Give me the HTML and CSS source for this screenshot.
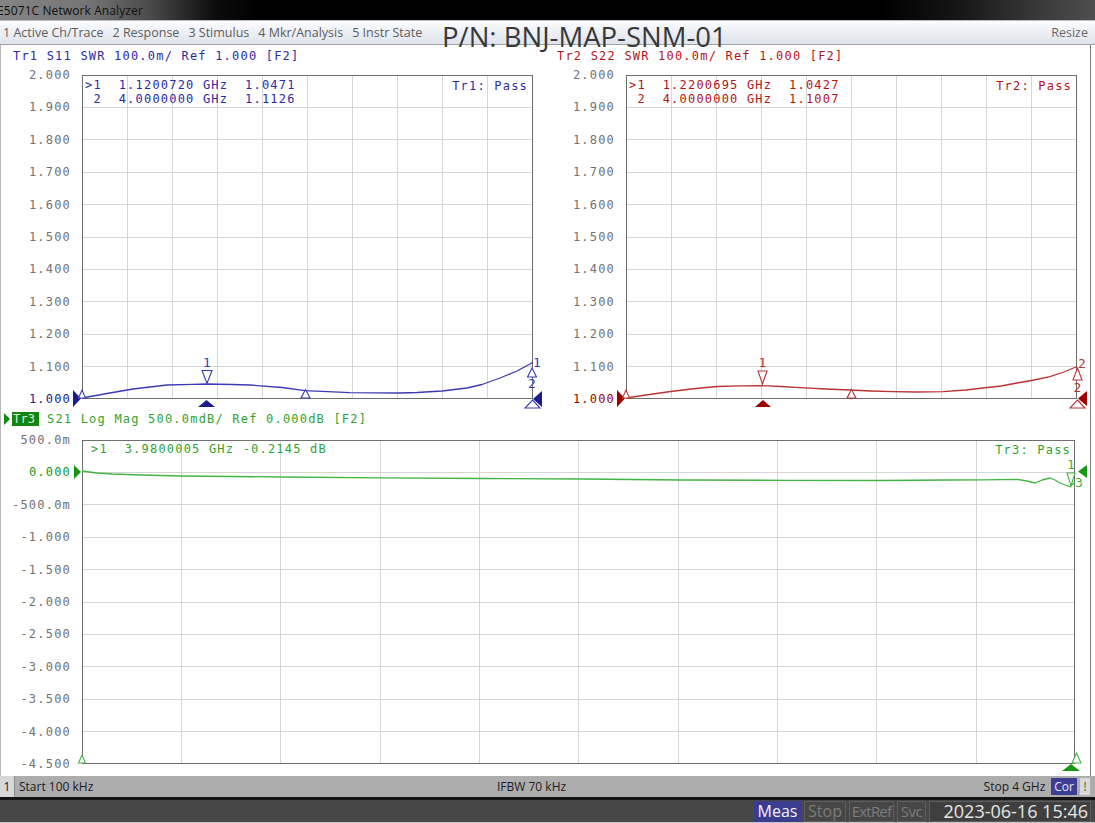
FILE: index.html
```html
<!DOCTYPE html>
<html>
<head>
<meta charset="utf-8">
<title>E5071C Network Analyzer</title>
<link rel="stylesheet" href="styles.css">
</head>
<body>
<div class="app">
  <div class="titlebar"><span class="title">E5071C Network Analyzer</span></div>
  <div class="menubar">
    <span class="menu-item">1 Active Ch/Trace</span>
    <span class="menu-item">2 Response</span>
    <span class="menu-item">3 Stimulus</span>
    <span class="menu-item">4 Mkr/Analysis</span>
    <span class="menu-item">5 Instr State</span>
    <span class="pn">P/N: BNJ-MAP-SNM-01</span>
    <span class="resize">Resize</span>
  </div>
  <div class="main">
    <div class="top-row">
      <section class="panel panel-a tr1">
        <div class="trace-head">Tr1 S11 SWR 100.0m/ Ref 1.000 [F2]</div>
        <div class="chart">
          <div class="yaxis">
            <span>2.000</span><span>1.900</span><span>1.800</span><span>1.700</span><span>1.600</span><span>1.500</span><span>1.400</span><span>1.300</span><span>1.200</span><span>1.100</span><span class="ref">1.000</span>
          </div>
          <div class="plot">
            <svg class="plot-svg" width="451" height="324" viewBox="0 0 451 324">
              <path class="grid" d="M45.5 0V324M90.5 0V324M135.5 0V324M180.5 0V324M225.5 0V324M270.5 0V324M315.5 0V324M360.5 0V324M405.5 0V324M0 32.5H451M0 64.5H451M0 97.5H451M0 129.5H451M0 162.5H451M0 194.5H451M0 226.5H451M0 259.5H451M0 291.5H451"/>
              <rect class="frame" x="0.5" y="0.5" width="450" height="323"/>
              <polyline class="trace" points="0,323 25,318.5 51,314 85,310 110,309.3 125,309 150,309.5 168,310 200,312.5 223,315.7 268,317.7 318,318 335,317.5 360,316 385,313 400,309.5 418,303 435,296 448,289 451,287"/>
              <polygon class="fill" points="-9,315 -1,323.5 -9,332"/>
              <polygon class="open" points="0,315 3.5,323 -3.5,323"/>
              <text class="mk" x="125" y="292">1</text>
              <polygon class="open" points="120,295.5 130,295.5 125,308.5"/>
              <polygon class="fill" points="124.5,325 133,332 116,332"/>
              <polygon class="open" points="223.5,314.5 228,323 219,323"/>
              <text class="mk" x="455" y="292">1</text>
              <polygon class="open" points="450,293 454.5,302 445.5,302"/>
              <text class="mk" x="450" y="313">2</text>
              <polygon class="fill" points="460,316 451,324 460,332"/>
              <polygon class="open" points="450.5,325 458,333 443,333"/>
            </svg>
            <pre class="readout">&gt;1  1.1200720 GHz  1.0471
 2  4.0000000 GHz  1.1126</pre>
            <div class="pass">Tr1: Pass</div>
          </div>
        </div>
      </section>
      <section class="panel panel-b tr2">
        <div class="trace-head">Tr2 S22 SWR 100.0m/ Ref 1.000 [F2]</div>
        <div class="chart">
          <div class="yaxis">
            <span>2.000</span><span>1.900</span><span>1.800</span><span>1.700</span><span>1.600</span><span>1.500</span><span>1.400</span><span>1.300</span><span>1.200</span><span>1.100</span><span class="ref">1.000</span>
          </div>
          <div class="plot">
            <svg class="plot-svg" width="451" height="324" viewBox="0 0 451 324">
              <path class="grid" d="M45.5 0V324M90.5 0V324M135.5 0V324M180.5 0V324M225.5 0V324M270.5 0V324M315.5 0V324M360.5 0V324M405.5 0V324M0 32.5H451M0 64.5H451M0 97.5H451M0 129.5H451M0 162.5H451M0 194.5H451M0 226.5H451M0 259.5H451M0 291.5H451"/>
              <rect class="frame" x="0.5" y="0.5" width="450" height="323"/>
              <polyline class="trace" points="0,323 20,320 41,317 65,314 91,311.5 115,310.8 136,310.7 155,311.5 174,312.7 200,314 224,315 245,316 267,316.7 290,317 317,316.7 340,315 357,313 375,311 391,308 408,305 424,301.7 438,297 451,291.5"/>
              <polygon class="fill" points="-9,315 -1,323.5 -9,332"/>
              <polygon class="open" points="0,315 3.5,323 -3.5,323"/>
              <text class="mk" x="136.5" y="292">1</text>
              <polygon class="open" points="132,296 141,296 136.5,309"/>
              <polygon class="fill" points="137,325 145,332 129,332"/>
              <polygon class="open" points="225.5,314.5 230,323 221,323"/>
              <text class="mk" x="456" y="293">2</text>
              <polygon class="open" points="451.5,293 456,305 447,305"/>
              <text class="mk" x="451.5" y="317">2</text>
              <polygon class="fill" points="461,316 452,323.5 461,331"/>
              <polygon class="open" points="451.5,325 459,333 444,333"/>
            </svg>
            <pre class="readout">&gt;1  1.2200695 GHz  1.0427
 2  4.0000000 GHz  1.1007</pre>
            <div class="pass">Tr2: Pass</div>
          </div>
        </div>
      </section>
    </div>
    <section class="panel panel-c tr3">
      <div class="trace-head"><span class="arrow"></span><span class="tr-badge">Tr3</span>S21 Log Mag 500.0mdB/ Ref 0.000dB [F2]</div>
      <div class="chart chart-wide">
        <div class="yaxis">
          <span>500.0m</span><span class="ref">0.000</span><span>-500.0m</span><span>-1.000</span><span>-1.500</span><span>-2.000</span><span>-2.500</span><span>-3.000</span><span>-3.500</span><span>-4.000</span><span>-4.500</span>
        </div>
        <div class="plot plot-wide">
          <svg class="plot-svg" width="993" height="324" viewBox="0 0 993 324">
            <path class="grid" d="M99.5 0V324M198.5 0V324M298.5 0V324M397.5 0V324M496.5 0V324M596.5 0V324M695.5 0V324M794.5 0V324M894.5 0V324M0 32.5H993M0 64.5H993M0 97.5H993M0 129.5H993M0 162.5H993M0 194.5H993M0 226.5H993M0 259.5H993M0 291.5H993"/>
            <rect class="frame" x="0.5" y="0.5" width="992" height="323"/>
            <polyline class="trace" points="0,31 15,33 30,34 60,35 98,36 150,36.5 200,37 300,37.8 400,38.5 500,39 600,40 700,40.3 800,40.5 868,40 900,39.8 935,39.3 945,41 953,43 960,40 968,38 973,40 978,43 983,45 988,46.7 991,44 993,42"/>
            <polygon class="fill" points="-8,25 -1,32 -8,39"/>
            <polygon class="open" points="0,315 3.5,323 -3.5,323"/>
            <text class="mk" x="989" y="29">1</text>
            <polygon class="open" points="985,33 993,33 989,46"/>
            <text class="mk mk-left" x="993" y="47">3</text>
            <polygon class="fill" points="1005,25 996,31.5 1005,38"/>
            <polygon class="open" points="994.5,313 999,323 990,323"/>
            <polygon class="fill" points="989,324 998,331 980,331"/>
          </svg>
          <pre class="readout">&gt;1  3.9800005 GHz -0.2145 dB</pre>
          <div class="pass">Tr3: Pass</div>
        </div>
      </div>
    </section>
  </div>
  <div class="statusbar">
    <span class="ch-cell">1</span>
    <span class="status-start">Start 100 kHz</span>
    <span class="status-ifbw">IFBW 70 kHz</span>
    <span class="status-stop">Stop 4 GHz</span>
    <span class="cor">Cor</span>
    <span class="bang">!</span>
  </div>
  <div class="taskbar">
    <span class="tb-item tb-meas">Meas</span>
    <span class="tb-item tb-dim tb-stop">Stop</span>
    <span class="tb-item tb-dim tb-ext">ExtRef</span>
    <span class="tb-item tb-dim tb-svc">Svc</span>
    <span class="tb-item tb-clock">2023-06-16 15:46</span>
  </div>
</div>
</body>
</html>
```

FILE: styles.css
```css
* { box-sizing: border-box; }
html, body { margin: 0; padding: 0; }
body {
  width: 1095px;
  height: 823px;
  overflow: hidden;
  background: #ffffff;
  font-family: "Open Sans", "Noto Sans", sans-serif;
}
.app {
  display: flex;
  flex-direction: column;
  width: 1095px;
  height: 823px;
}

/* title bar */
.titlebar {
  height: 20px;
  flex: none;
  display: flex;
  align-items: center;
  background: linear-gradient(90deg, #858585 0px, #747474 90px, #4a4a4a 150px, #0c0c0c 215px, #000 260px, #000 880px, #161616 960px, #3a3a3a 1040px, #4e4e4e 1095px);
}
.title {
  font-size: 12px;
  color: #101010;
  margin-left: -3px;
  letter-spacing: 0.1px;
}

/* menu bar */
.menubar {
  height: 25px;
  flex: none;
  position: relative;
  display: flex;
  align-items: center;
  gap: 9px;
  padding-left: 3px;
  background: linear-gradient(#fbfcfe, #e9edf3 60%, #dfe4eb);
  border-top: 1px solid #b9bec6;
  border-bottom: 1px solid #9ea3aa;
  font-size: 12.5px;
  color: #5c5c5c;
}
.menu-item { white-space: nowrap; }
.pn {
  position: absolute;
  left: 442px;
  top: -1px;
  font-size: 27.5px;
  line-height: 34px;
  color: #383838;
  white-space: nowrap;
}
.resize {
  margin-left: auto;
  margin-right: 7px;
  color: #6a6a6a;
}

/* main area */
.main {
  height: 731px;
  flex: none;
  background: #fff;
  border-left: 1px solid #b8b8b8;
  border-right: 1px solid #7a7a7a;
  margin-right: 4px;
  display: flex;
  flex-direction: column;
}
.top-row { display: flex; }
.panel-a { width: 544px; flex: none; }
.panel-b { flex: 1; }

.trace-head {
  font-family: "DejaVu Sans Mono", monospace;
  font-size: 12px;
  letter-spacing: 1.2px;
  height: 14px;
  line-height: 14px;
  margin-top: 4px;
  padding-left: 12px;
  white-space: pre;
  display: flex;
  align-items: center;
}
.tr1 { color: #2c2ca2; --trace: #3b3bb4; --fill: #1c1c8e; }
.tr2 { color: #b11616; --trace: #b93434; --fill: #9e0000; }
.tr3 { color: #31a331; --trace: #43b443; --fill: #169816; }

.panel-c .trace-head { margin-top: 6px; padding-left: 3px; }
.arrow {
  width: 0; height: 0;
  border-top: 6px solid transparent;
  border-bottom: 6px solid transparent;
  border-left: 6px solid #0f8a0f;
  margin-right: 2px;
}
.tr-badge {
  background: #118411;
  color: #d8f2cf;
  height: 14px;
  line-height: 14px;
  padding: 0 0 0 1px;
  width: 27px;
  margin-right: 8px;
  letter-spacing: 0.2px;
}

.chart {
  display: grid;
  grid-template-columns: 70px 451px;
  column-gap: 11px;
  align-items: start;
  margin-top: 5px;
}
.chart-wide {
  grid-template-columns: 70px 993px;
  margin-top: 7px;
}
.yaxis {
  height: 338px;
  display: flex;
  flex-direction: column;
  justify-content: space-between;
  align-items: flex-end;
  font-family: "DejaVu Sans Mono", monospace;
  font-size: 12px;
  letter-spacing: 1.2px;
  line-height: 14px;
  color: #717171;
}
.yaxis .ref { color: var(--fill); }

.plot {
  position: relative;
  width: 451px;
  height: 324px;
  margin-top: 7px;
}
.plot-wide { width: 993px; }
.plot-svg { display: block; overflow: visible; }
.grid { stroke: #d6d6d6; stroke-width: 1; fill: none; }
.frame { stroke: #6e6e6e; stroke-width: 1; fill: none; }
.trace { stroke: var(--trace); stroke-width: 1.3; fill: none; stroke-linejoin: round; }
.fill { fill: var(--fill); }
.open { fill: #fff; stroke: var(--trace); stroke-width: 1.1; }
.mk {
  font-family: "DejaVu Sans Mono", monospace;
  font-size: 13px;
  fill: var(--trace);
  text-anchor: middle;
}
.mk-left { text-anchor: start; }

.readout {
  position: absolute;
  top: 3px;
  left: 3px;
  margin: 0;
  font-family: "DejaVu Sans Mono", monospace;
  font-size: 12px;
  letter-spacing: 1.2px;
  line-height: 14px;
  color: inherit;
}
.plot-wide .readout { left: 9px; top: 2px; }
.pass {
  position: absolute;
  top: 4px;
  right: 5px;
  font-family: "DejaVu Sans Mono", monospace;
  font-size: 12px;
  letter-spacing: 1.2px;
  line-height: 14px;
  white-space: pre;
}
.plot-wide .pass { top: 3px; right: 4px; }

/* status bar */
.statusbar {
  height: 21px;
  flex: none;
  display: flex;
  align-items: stretch;
  background: #adadad;
  font-size: 12px;
  color: #1c1c1c;
  line-height: 21px;
}
.ch-cell {
  width: 15px;
  text-align: center;
  background: #d7d7d7;
  border-right: 1px solid #8c8c8c;
}
.status-start { margin-left: 4px; width: 478px; }
.status-ifbw { width: 477px; }
.status-stop { margin-left: auto; margin-right: 6px; }
.cor {
  background: #3d3d94;
  color: #e8e8f6;
  padding: 0 3px;
  margin: 2px 0;
  line-height: 17px;
}
.bang {
  width: 10px;
  margin: 2px 5px 2px 3px;
  background: #d9d9d9;
  line-height: 17px;
  text-align: center;
  color: #555;
}

/* taskbar */
.taskbar {
  flex: 1;
  display: flex;
  justify-content: flex-end;
  align-items: stretch;
  background: #474747;
  border-top: 3px solid #141414;
  border-bottom: 3px solid #c4c4c4;
  padding: 1px 4px 0 0;
  gap: 3px;
  font-size: 16px;
  line-height: 19px;
}
.tb-item {
  padding: 0;
  text-align: center;
  border: 1px solid #5e5e5e;
  color: #7c7c7c;
  white-space: nowrap;
}
.tb-meas { width: 47px; background: #3c3c8e; color: #f2f2ff; border-color: #3c3c8e; }
.tb-stop { width: 42px; }
.tb-ext { width: 45px; letter-spacing: -0.8px; font-size: 15px; }
.tb-svc { width: 29px; letter-spacing: -0.5px; font-size: 15px; }
.tb-clock {
  width: 162px;
  text-align: right;
  color: #e6e6e6;
  font-size: 18px;
  padding: 0 2px 0 0;
  background: #3f3f3f;
}
```
